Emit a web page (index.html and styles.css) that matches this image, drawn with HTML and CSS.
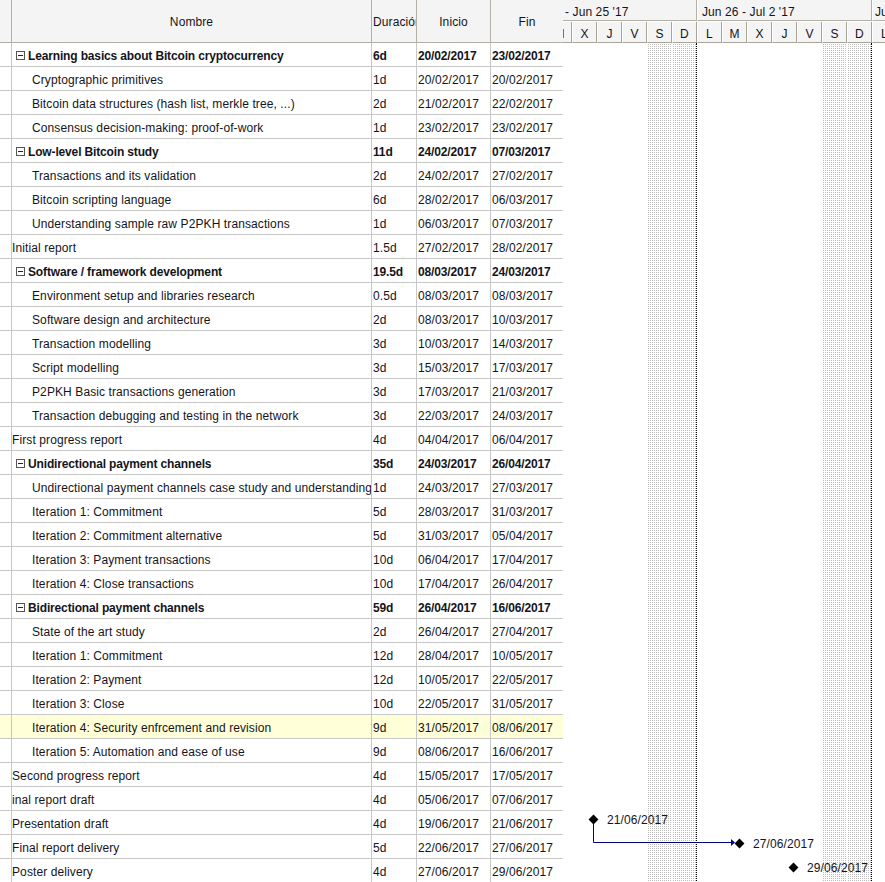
FILE: index.html
```html
<!DOCTYPE html>
<html>
<head>
<meta charset="utf-8">
<link rel="stylesheet" href="styles.css">
</head>
<body>
<div class="app">
  <div class="grid">
    <div class="hdr">
      <div class="hc gut"></div>
      <div class="hc name">Nombre</div>
      <div class="hc dur">Duración</div>
      <div class="hc ini">Inicio</div>
      <div class="hc fin">Fin</div>
    </div>
    <div class="rows" id="rows">
      <div class="row sum"><div class="c gut"></div><div class="c name"><span class="box"></span>Learning basics about Bitcoin cryptocurrency</div><div class="c dur">6d</div><div class="c ini">20/02/2017</div><div class="c fin">23/02/2017</div></div>
      <div class="row sub"><div class="c gut"></div><div class="c name">Cryptographic primitives</div><div class="c dur">1d</div><div class="c ini">20/02/2017</div><div class="c fin">20/02/2017</div></div>
      <div class="row sub"><div class="c gut"></div><div class="c name">Bitcoin data structures (hash list, merkle tree, ...)</div><div class="c dur">2d</div><div class="c ini">21/02/2017</div><div class="c fin">22/02/2017</div></div>
      <div class="row sub"><div class="c gut"></div><div class="c name">Consensus decision-making: proof-of-work</div><div class="c dur">1d</div><div class="c ini">23/02/2017</div><div class="c fin">23/02/2017</div></div>
      <div class="row sum"><div class="c gut"></div><div class="c name"><span class="box"></span>Low-level Bitcoin study</div><div class="c dur">11d</div><div class="c ini">24/02/2017</div><div class="c fin">07/03/2017</div></div>
      <div class="row sub"><div class="c gut"></div><div class="c name">Transactions and its validation</div><div class="c dur">2d</div><div class="c ini">24/02/2017</div><div class="c fin">27/02/2017</div></div>
      <div class="row sub"><div class="c gut"></div><div class="c name">Bitcoin scripting language</div><div class="c dur">6d</div><div class="c ini">28/02/2017</div><div class="c fin">06/03/2017</div></div>
      <div class="row sub"><div class="c gut"></div><div class="c name">Understanding sample raw P2PKH transactions</div><div class="c dur">1d</div><div class="c ini">06/03/2017</div><div class="c fin">07/03/2017</div></div>
      <div class="row top"><div class="c gut"></div><div class="c name">Initial report</div><div class="c dur">1.5d</div><div class="c ini">27/02/2017</div><div class="c fin">28/02/2017</div></div>
      <div class="row sum"><div class="c gut"></div><div class="c name"><span class="box"></span>Software / framework development</div><div class="c dur">19.5d</div><div class="c ini">08/03/2017</div><div class="c fin">24/03/2017</div></div>
      <div class="row sub"><div class="c gut"></div><div class="c name">Environment setup and libraries research</div><div class="c dur">0.5d</div><div class="c ini">08/03/2017</div><div class="c fin">08/03/2017</div></div>
      <div class="row sub"><div class="c gut"></div><div class="c name">Software design and architecture</div><div class="c dur">2d</div><div class="c ini">08/03/2017</div><div class="c fin">10/03/2017</div></div>
      <div class="row sub"><div class="c gut"></div><div class="c name">Transaction modelling</div><div class="c dur">3d</div><div class="c ini">10/03/2017</div><div class="c fin">14/03/2017</div></div>
      <div class="row sub"><div class="c gut"></div><div class="c name">Script modelling</div><div class="c dur">3d</div><div class="c ini">15/03/2017</div><div class="c fin">17/03/2017</div></div>
      <div class="row sub"><div class="c gut"></div><div class="c name">P2PKH Basic transactions generation</div><div class="c dur">3d</div><div class="c ini">17/03/2017</div><div class="c fin">21/03/2017</div></div>
      <div class="row sub"><div class="c gut"></div><div class="c name">Transaction debugging and testing in the network</div><div class="c dur">3d</div><div class="c ini">22/03/2017</div><div class="c fin">24/03/2017</div></div>
      <div class="row top"><div class="c gut"></div><div class="c name">First progress report</div><div class="c dur">4d</div><div class="c ini">04/04/2017</div><div class="c fin">06/04/2017</div></div>
      <div class="row sum"><div class="c gut"></div><div class="c name"><span class="box"></span>Unidirectional payment channels</div><div class="c dur">35d</div><div class="c ini">24/03/2017</div><div class="c fin">26/04/2017</div></div>
      <div class="row sub"><div class="c gut"></div><div class="c name">Undirectional payment channels case study and understanding</div><div class="c dur">1d</div><div class="c ini">24/03/2017</div><div class="c fin">27/03/2017</div></div>
      <div class="row sub"><div class="c gut"></div><div class="c name">Iteration 1: Commitment</div><div class="c dur">5d</div><div class="c ini">28/03/2017</div><div class="c fin">31/03/2017</div></div>
      <div class="row sub"><div class="c gut"></div><div class="c name">Iteration 2: Commitment alternative</div><div class="c dur">5d</div><div class="c ini">31/03/2017</div><div class="c fin">05/04/2017</div></div>
      <div class="row sub"><div class="c gut"></div><div class="c name">Iteration 3: Payment transactions</div><div class="c dur">10d</div><div class="c ini">06/04/2017</div><div class="c fin">17/04/2017</div></div>
      <div class="row sub"><div class="c gut"></div><div class="c name">Iteration 4: Close transactions</div><div class="c dur">10d</div><div class="c ini">17/04/2017</div><div class="c fin">26/04/2017</div></div>
      <div class="row sum"><div class="c gut"></div><div class="c name"><span class="box"></span>Bidirectional payment channels</div><div class="c dur">59d</div><div class="c ini">26/04/2017</div><div class="c fin">16/06/2017</div></div>
      <div class="row sub"><div class="c gut"></div><div class="c name">State of the art study</div><div class="c dur">2d</div><div class="c ini">26/04/2017</div><div class="c fin">27/04/2017</div></div>
      <div class="row sub"><div class="c gut"></div><div class="c name">Iteration 1: Commitment</div><div class="c dur">12d</div><div class="c ini">28/04/2017</div><div class="c fin">10/05/2017</div></div>
      <div class="row sub"><div class="c gut"></div><div class="c name">Iteration 2: Payment</div><div class="c dur">12d</div><div class="c ini">10/05/2017</div><div class="c fin">22/05/2017</div></div>
      <div class="row sub"><div class="c gut"></div><div class="c name">Iteration 3: Close</div><div class="c dur">10d</div><div class="c ini">22/05/2017</div><div class="c fin">31/05/2017</div></div>
      <div class="row sub sel"><div class="c gut"></div><div class="c name">Iteration 4: Security enfrcement and revision</div><div class="c dur">9d</div><div class="c ini">31/05/2017</div><div class="c fin">08/06/2017</div></div>
      <div class="row sub"><div class="c gut"></div><div class="c name">Iteration 5: Automation and ease of use</div><div class="c dur">9d</div><div class="c ini">08/06/2017</div><div class="c fin">16/06/2017</div></div>
      <div class="row top"><div class="c gut"></div><div class="c name">Second progress report</div><div class="c dur">4d</div><div class="c ini">15/05/2017</div><div class="c fin">17/05/2017</div></div>
      <div class="row top"><div class="c gut"></div><div class="c name">inal report draft</div><div class="c dur">4d</div><div class="c ini">05/06/2017</div><div class="c fin">07/06/2017</div></div>
      <div class="row top"><div class="c gut"></div><div class="c name">Presentation draft</div><div class="c dur">4d</div><div class="c ini">19/06/2017</div><div class="c fin">21/06/2017</div></div>
      <div class="row top"><div class="c gut"></div><div class="c name">Final report delivery</div><div class="c dur">5d</div><div class="c ini">22/06/2017</div><div class="c fin">27/06/2017</div></div>
      <div class="row top"><div class="c gut"></div><div class="c name">Poster delivery</div><div class="c dur">4d</div><div class="c ini">27/06/2017</div><div class="c fin">29/06/2017</div></div>
    </div>
  </div>
  <div class="gantt">
    <div class="scale">
      <div class="weeks">
        <div class="wk w1">- Jun 25 '17</div>
        <div class="wk w2">Jun 26 - Jul 2 '17</div>
        <div class="wk w3">Jul 3 - Jul 9 '17</div>
      </div>
      <div class="days">
        <div class="day">M</div><div class="day">X</div><div class="day">J</div><div class="day">V</div><div class="day">S</div><div class="day">D</div>
        <div class="day">L</div><div class="day">M</div><div class="day">X</div><div class="day">J</div><div class="day">V</div><div class="day">S</div><div class="day">D</div>
        <div class="day">L</div>
      </div>
    </div>
    <div class="body">
      <div class="cols">
        <div class="col"></div><div class="col"></div><div class="col"></div><div class="col"></div><div class="col we"></div><div class="col we sun"></div>
        <div class="col"></div><div class="col"></div><div class="col"></div><div class="col"></div><div class="col"></div><div class="col we"></div><div class="col we sun"></div>
        <div class="col"></div>
      </div>
      <svg class="links" width="322" height="840" viewBox="0 0 322 840">
        <polyline points="30.5,780 30.5,799.5 168,799.5" fill="none" stroke="#000080" stroke-width="1"/>
        <polygon points="168,796 172,799.5 168,803" fill="#000080"/>
      </svg>
      <div class="ms m1"><span class="dia"></span><span class="lbl">21/06/2017</span></div>
      <div class="ms m2"><span class="dia"></span><span class="lbl">27/06/2017</span></div>
      <div class="ms m3"><span class="dia"></span><span class="lbl">29/06/2017</span></div>
    </div>
  </div>
</div>
</body>
</html>
```

FILE: styles.css
```css
* { box-sizing: border-box; }
html, body { margin: 0; padding: 0; background: #fff; }
body {
  font-family: "Liberation Sans", Arial, sans-serif;
  font-size: 12px;
  letter-spacing: 0.1px;
  color: #141420;
  width: 885px;
  height: 882px;
  overflow: hidden;
}
.app { display: flex; width: 885px; height: 882px; overflow: hidden; }

/* ---------- grid ---------- */
.grid { width: 563px; flex: none; }
.hdr, .row {
  display: grid;
  grid-template-columns: 12px 360px 45px 74px 72px;
}
.hdr { height: 43px; background: #f4f4f4; border-bottom: 1px solid #b4b0a4; }
.hc {
  display: flex; align-items: center; justify-content: center;
  border-right: 1px solid #b4b0a4;
  white-space: nowrap; overflow: hidden;
  padding-top: 2px;
}
.hc.fin { border-right: none; }
.hc.dur { justify-content: flex-start; padding-left: 1px; }

.row { height: 24px; border-bottom: 1px solid #c8c8c8; line-height: 20px; }
.c {
  border-right: 1px solid #c8c8c8;
  white-space: nowrap; overflow: hidden;
  padding-left: 1px;
  padding-top: 3px;
}
.c.fin { border-right: none; }
.c.name { padding-left: 0; display: flex; align-items: center; }
.sub .c.name { padding-left: 20px; }
.sum .c.name { padding-left: 4px; }
.sum { font-weight: bold; letter-spacing: -0.15px; }
.sel { background: #ffffd8; }
.box {
  width: 9px; height: 9px; border: 1px solid #555;
  margin-right: 3px; position: relative; flex: none;
  margin-top: -1px;
}
.box::after {
  content: ""; position: absolute; left: 1px; right: 1px; top: 3px;
  height: 1px; background: #222;
}

/* ---------- gantt ---------- */
.gantt { width: 322px; flex: none; overflow: hidden; }
.scale { height: 43px; }
.weeks { display: flex; height: 21px; }
.wk {
  flex: none; height: 21px; line-height: 20px; padding-top: 2px;
  background: #f4f4f4;
  border-bottom: 1px solid #b4b0a4;
  border-right: 1px solid #b4b0a4;
  border-left: 1px solid #fff;
  white-space: nowrap; overflow: hidden;
}
.w1 { width: 134px; padding-left: 2px; border-left: none; }
.w2 { width: 175px; padding-left: 4px; }
.w3 { width: 60px; padding-left: 2px; }
.days { display: flex; margin-top: 1px; margin-left: -16px; height: 21px; }
.day {
  flex: none; width: 25px; height: 21px; line-height: 20px; text-align: center;
  padding-top: 2px;
  background: #f4f4f4;
  border-left: 1px solid #fff;
  border-right: 1px solid #a8a498;
  border-bottom: 1px solid #a8a498;
}
.body { position: relative; height: 840px; }
.cols { display: flex; margin-left: -16px; height: 100%; }
.col { flex: none; width: 25px; height: 100%; }
.col.we {
  background-color: #fff;
  background-image:
    linear-gradient(90deg, #fff 1px, transparent 1px),
    linear-gradient(#fff 1px, #bdbdbd 1px);
  background-size: 2px 2px;
  background-position: 0 0;
}
.col.sun { border-right: 1px dotted #000; }

.links { position: absolute; left: 0; top: 0; }
.ms { position: absolute; display: flex; align-items: center; height: 14px; }
.dia {
  width: 7px; height: 7px; background: #000;
  transform: rotate(45deg);
  margin-left: 2px; margin-right: 10px;
}
.lbl { white-space: nowrap; padding-top: 1px; }
.m1 { left: 25px; top: 769px; }
.m2 { left: 171px; top: 793px; }
.m3 { left: 225px; top: 817px; }
```
